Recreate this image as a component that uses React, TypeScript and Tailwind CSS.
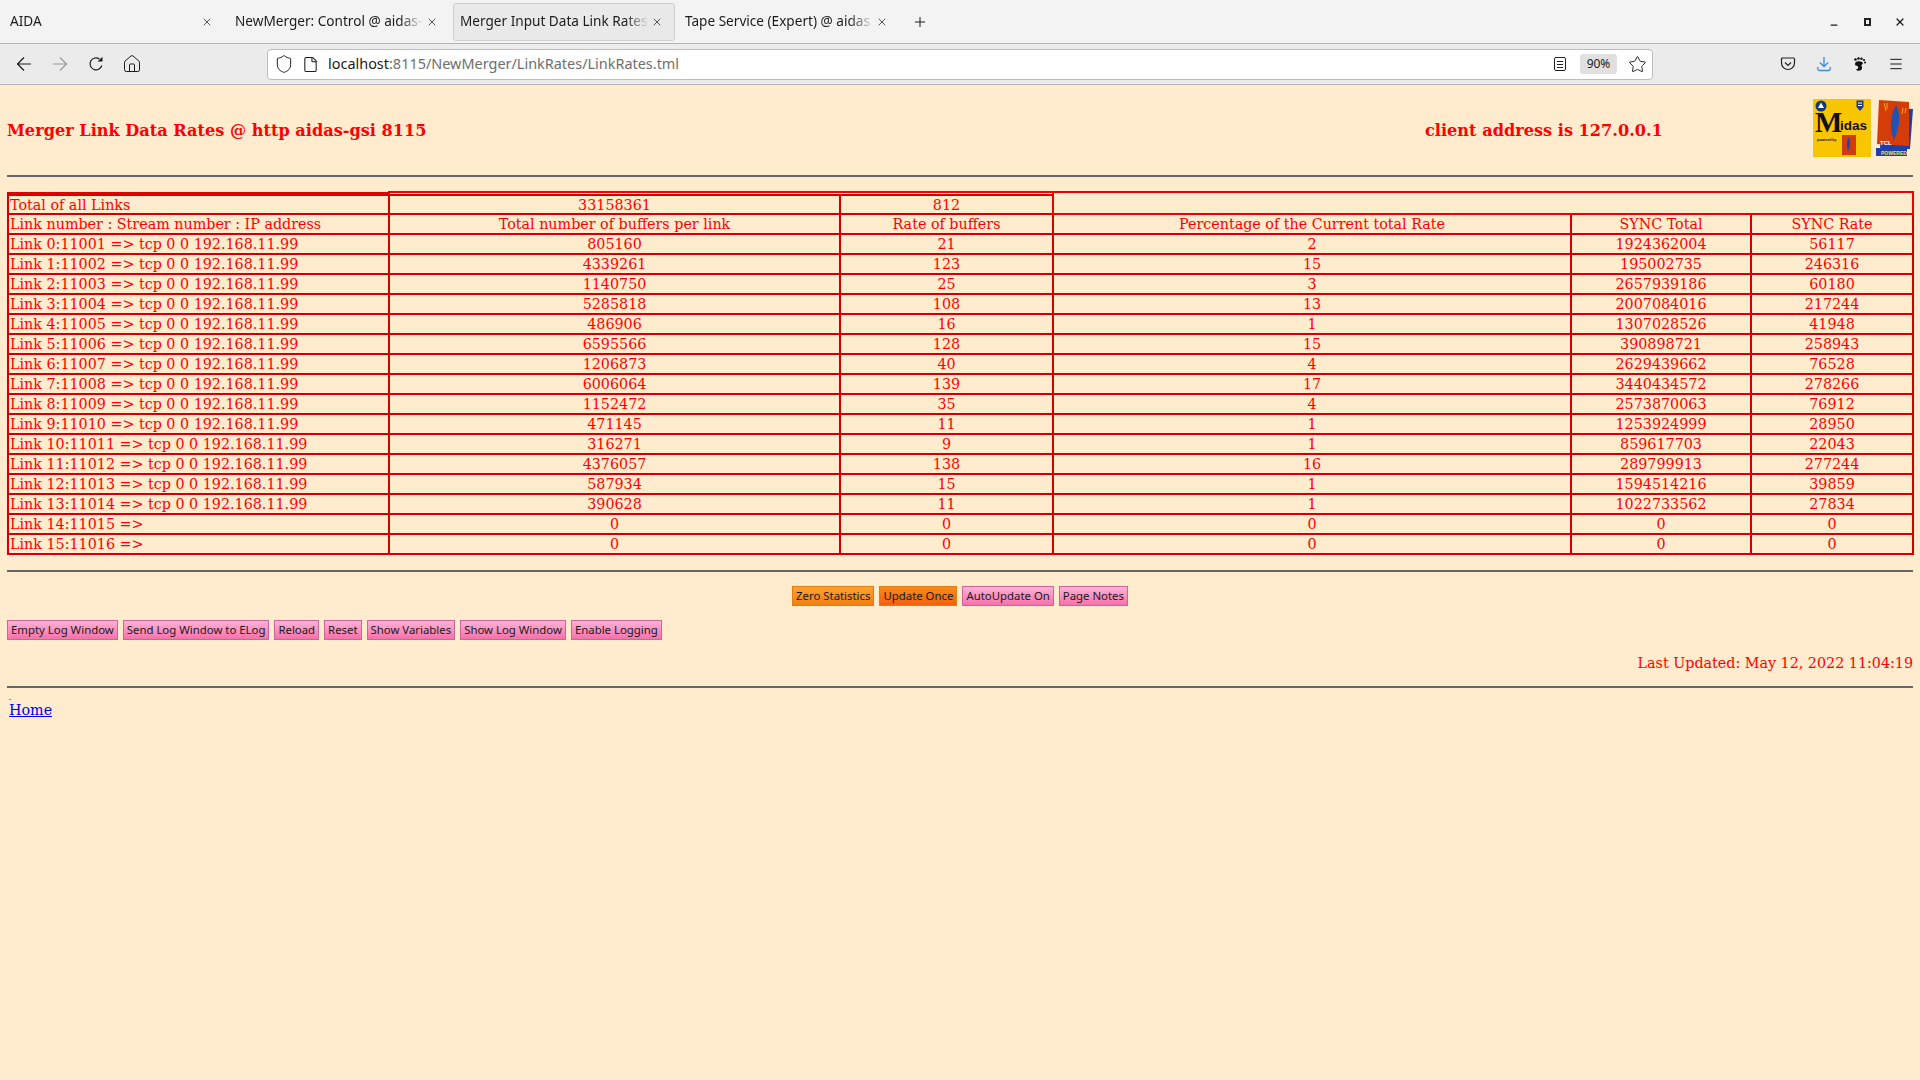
import { Home, Shield, File, Star, Menu, X, Plus, Minus } from "lucide-react";

const serif = "font-['DejaVu_Serif','Liberation_Serif',serif]";

const tabs = [
  { title: "AIDA", active: false },
  { title: "NewMerger: Control @ aidas-", active: false },
  { title: "Merger Input Data Link Rates", active: true },
  { title: "Tape Service (Expert) @ aidas", active: false },
];

// name, buffers, rate, percent, sync total, sync rate
const rows: string[][] = [
  ["Link 0:11001 => tcp 0 0 192.168.11.99", "805160", "21", "2", "1924362004", "56117"],
  ["Link 1:11002 => tcp 0 0 192.168.11.99", "4339261", "123", "15", "195002735", "246316"],
  ["Link 2:11003 => tcp 0 0 192.168.11.99", "1140750", "25", "3", "2657939186", "60180"],
  ["Link 3:11004 => tcp 0 0 192.168.11.99", "5285818", "108", "13", "2007084016", "217244"],
  ["Link 4:11005 => tcp 0 0 192.168.11.99", "486906", "16", "1", "1307028526", "41948"],
  ["Link 5:11006 => tcp 0 0 192.168.11.99", "6595566", "128", "15", "390898721", "258943"],
  ["Link 6:11007 => tcp 0 0 192.168.11.99", "1206873", "40", "4", "2629439662", "76528"],
  ["Link 7:11008 => tcp 0 0 192.168.11.99", "6006064", "139", "17", "3440434572", "278266"],
  ["Link 8:11009 => tcp 0 0 192.168.11.99", "1152472", "35", "4", "2573870063", "76912"],
  ["Link 9:11010 => tcp 0 0 192.168.11.99", "471145", "11", "1", "1253924999", "28950"],
  ["Link 10:11011 => tcp 0 0 192.168.11.99", "316271", "9", "1", "859617703", "22043"],
  ["Link 11:11012 => tcp 0 0 192.168.11.99", "4376057", "138", "16", "289799913", "277244"],
  ["Link 12:11013 => tcp 0 0 192.168.11.99", "587934", "15", "1", "1594514216", "39859"],
  ["Link 13:11014 => tcp 0 0 192.168.11.99", "390628", "11", "1", "1022733562", "27834"],
  ["Link 14:11015 =>", "0", "0", "0", "0", "0"],
  ["Link 15:11016 =>", "0", "0", "0", "0", "0"],
];

const cell = "border-2 border-[#d40000] h-5 p-0 px-[1px] leading-[18px] font-normal";
const firstCell = "border-2 border-[#d40000] h-[19px] p-0 px-[1px] leading-[16px] font-normal";

function PageButton({ label, color }: { label: string; color: "pink" | "orange" | "deep" }) {
  const styles = {
    pink: "border-[#cc6699] bg-gradient-to-b from-[#ffb0d8] to-[#f570aa]",
    orange: "border-[#e08010] bg-gradient-to-b from-[#ffa030] to-[#f08010]",
    deep: "border-[#e08010] bg-gradient-to-b from-[#f98a1c] to-[#f25f0c]",
  };
  return (
    <button className={`h-5 px-[3px] border text-[11.38px] leading-none text-[#1a1a1a] font-['Noto_Sans',sans-serif] whitespace-nowrap ${styles[color]}`}>
      {label}
    </button>
  );
}

function MidasLogo() {
  return (
    <svg width="58" height="58" viewBox="0 0 58 58" className="shrink-0">
      <rect width="58" height="58" fill="#f7c600" />
      <circle cx="8" cy="7" r="5.500" fill="#123a7a" />
      <path d="M8 3.500 L11 9 H5 Z" fill="#ffffff" />
      <path d="M43.500 1.500 H50.500 V8 L47 12 L43.500 8 Z" fill="#1d3c8f" />
      <rect x="45" y="3.500" width="4" height="1" fill="#ffffff" />
      <rect x="45" y="6" width="4" height="1" fill="#ffffff" />
      <text x="2" y="33" fontFamily="'Liberation Serif', serif" fontWeight="700" fontSize="29" fill="#111">M</text>
      <text x="27" y="31" fontFamily="'Liberation Sans', sans-serif" fontWeight="700" fontSize="13.500" fill="#111">idas</text>
      <text x="4" y="41.500" fontFamily="'Liberation Sans', sans-serif" fontWeight="700" fontSize="3.500" fill="#111">powered by</text>
      <rect x="29" y="36" width="14" height="20" fill="#d13c0a" />
      <path d="M36 38 C33 43 34 48 35 52 C37 48 38 43 36 38 Z" fill="#2148a8" />
    </svg>
  );
}

function TclLogo() {
  return (
    <svg width="37" height="58" viewBox="0 0 37 58" className="shrink-0">
      <path d="M6 8 L37 10 L34 50 L4 50 Z" fill="#1d3fa8" />
      <path d="M3 1 L33 3 L33 47 L1 45 Z" fill="#d63c08" />
      <path d="M20 6 C13 18 14 32 18 41 C23 30 26 16 20 6 Z" fill="#2452b0" />
      <path d="M8 4 L10 12 M11 4 L11 10 M27 9 L26 15 M30 9 L29 14" stroke="#f5a623" strokeWidth="1" />
      <text x="4" y="46" fontFamily="'Liberation Sans', sans-serif" fontWeight="700" fontSize="6" fill="#fff">TCL</text>
      <rect x="0" y="49" width="31" height="8" fill="#1d3fa8" />
      <text x="5" y="55.500" fontFamily="'Liberation Sans', sans-serif" fontWeight="700" fontSize="5" fill="#f7e63a">POWERED</text>
    </svg>
  );
}

function NavArrow({ flip, className }: { flip?: boolean; className?: string }) {
  return (
    <svg width="16" height="16" viewBox="0 0 16 16" fill="none" stroke="currentColor" strokeWidth="1.200" className={`${flip ? "rotate-180" : ""} ${className ?? ""}`}>
      <path d="M1.500 8 H15 M8 1.500 L1.500 8 L8 14.500" />
    </svg>
  );
}

function BrowserChrome() {
  return (
    <div className="font-['Noto_Sans',sans-serif] text-[#1c1c1c]">
      <div className="h-[44px] bg-[#f3f3f3] border-b border-[#b4b4b4] flex items-center pl-[3px]">
        {tabs.map((t) => (
          <div
            key={t.title}
            className={`w-[222px] mr-[3px] h-[38px] shrink-0 flex items-center text-[13.6px] rounded-[3px] ${
              t.active ? "pl-[6px] pr-[11px] bg-[#e9e9e9] border border-[#cfcfcf]" : "pl-[7px] pr-[12px]"
            }`}
          >
            <span className="flex-1 overflow-hidden whitespace-nowrap [mask-image:linear-gradient(to_left,transparent,black_24px)]">{t.title}</span>
            <X size={12} strokeWidth={1.5} className="ml-[2px] shrink-0" />
          </div>
        ))}
        <Plus size={16} strokeWidth={1.5} className="ml-[9px]" />
        <div className="ml-auto flex items-center gap-[23px] pr-[14px]">
          <Minus size={10} strokeWidth={3} className="mt-[6px] mr-[2px]" />
          <div className="w-[7px] h-[8px] border-2 border-[#222]" />
          <X size={12} strokeWidth={2.5} />
        </div>
      </div>
      <div className="h-[41px] bg-[#ebebeb] border-b border-[#b8b8b8] flex items-center pl-[16px] pr-[16px]">
        <NavArrow />
        <NavArrow flip className="ml-[20px] text-[#9a9a9a]" />
        <svg width="16" height="16" viewBox="0 0 16 16" fill="none" stroke="currentColor" strokeWidth="1.200" className="ml-[20px]">
          <path d="M13.800 9.500 A6 6 0 1 1 11.500 3" />
          <path d="M9.500 5.500 L14.500 5.500 L14.500 0.800 Z" fill="currentColor" stroke="none" />
        </svg>
        <Home size={20} strokeWidth={1.2} className="ml-[18px]" />
        <div className="ml-[125px] w-[1386px] h-[31px] bg-white border border-[#bdbdbd] rounded-[4px] flex items-center pl-[6px] pr-[5px]">
          <Shield size={20} strokeWidth={1.2} />
          <File size={17} strokeWidth={1.5} className="ml-[8px]" />
          <span className="ml-[9px] text-[14.45px]">
            localhost<span className="text-[#6e6e6e]">:8115/NewMerger/LinkRates/LinkRates.tml</span>
          </span>
          <div className="ml-auto w-[12px] h-[14px] border-[1.5px] border-[#222] rounded-[2px] flex flex-col items-center justify-center gap-[2px]">
            <div className="w-[6px] h-px bg-[#222]" />
            <div className="w-[6px] h-px bg-[#222]" />
            <div className="w-[6px] h-px bg-[#222]" />
          </div>
          <div className="ml-[14px] w-[37px] h-[20px] bg-[#e0e0e0] rounded-[3px] text-[12px] flex items-center justify-center">90%</div>
          <Star size={19} strokeWidth={1.2} className="ml-[11px]" />
        </div>
        <div className="ml-auto flex items-center gap-[20px]">
          <svg width="16" height="16" viewBox="0 0 16 16" fill="none" stroke="#222" strokeWidth="1.200">
            <path d="M2.500 2 H13.500 A1 1 0 0 1 14.500 3 V7 A6.500 6.500 0 0 1 1.500 7 V3 A1 1 0 0 1 2.500 2 Z" />
            <path d="M5 6.500 L8 9.500 L11 6.500" />
          </svg>
          <svg width="16" height="16" viewBox="0 0 16 16" fill="none" stroke="#3b8be0" strokeWidth="1.300">
            <path d="M8 1 V10.500 M3.800 6.500 L8 10.500 L12.200 6.500" />
            <path d="M1.800 11 V13 A1.500 1.500 0 0 0 3.300 14.500 H12.700 A1.500 1.500 0 0 0 14.200 13 V11" />
          </svg>
          <svg width="16" height="16" viewBox="0 0 16 16" fill="#111">
            <path d="M3 8 C3 5.500 6 5 8.500 5.500 C11 6 11.500 7.500 10 8.500 C8.500 9.500 10.500 10.500 10 12.500 C9.500 15 5.500 15.500 4 13.500 C5.500 13 7 12 6 10.500 C5 9.500 3 10 3 8 Z" />
            <circle cx="3.500" cy="3.500" r="1.300" />
            <circle cx="6.500" cy="2.500" r="1.300" />
            <circle cx="9.500" cy="2.800" r="1.200" />
            <circle cx="12" cy="4" r="1.100" />
            <circle cx="13" cy="6.500" r="1" />
          </svg>
          <Menu size={16} strokeWidth={1.5} />
        </div>
      </div>
    </div>
  );
}

function Rule() {
  return <hr className="border-0 h-[2px] bg-[#666666] mx-[7px]" />;
}

export default function App() {
  return (
    <div className={`w-[1920px] h-[1080px] overflow-hidden bg-[#ffebcd] text-[14.3px] text-[#ff0000] ${serif}`}>
      <BrowserChrome />

      {/* header */}
      <div className="h-[90px] flex items-center pl-[7px] pr-[7px] font-bold text-[16.15px]">
        <span className="w-[1418px] mt-[3px]">Merger Link Data Rates @ http aidas-gsi 8115</span>
        <span className="flex-1 mt-[3px]">client address is 127.0.0.1</span>
        <div className="flex items-center gap-[5px] mb-[4px]">
          <MidasLogo />
          <TclLogo />
        </div>
      </div>
      <Rule />

      <div className="mx-[7px] mt-[14px]">
        <table className="w-[1905px] table-fixed border-collapse">
          <colgroup>
            <col className="w-[381px]" />
            <col className="w-[451px]" />
            <col className="w-[213px]" />
            <col className="w-[518px]" />
            <col className="w-[180px]" />
            <col className="w-[162px]" />
          </colgroup>
          <tbody>
            <tr className="h-[3px]">
              <td className="p-0 border-x-2 border-x-[#d40000] bg-[#e00000]" />
              <td colSpan={2} className="p-0 border-t-2 border-t-[#ff0000]" />
              <td colSpan={3} rowSpan={2} className="p-0 border-2 border-[#f00000]" />
            </tr>
            <tr>
              <td className={firstCell}>Total of all Links</td>
              <td className={`${firstCell} text-center`}>33158361</td>
              <td className={`${firstCell} text-center`}>812</td>
            </tr>
            <tr>
              <td className={cell}>Link number : Stream number : IP address</td>
              <td className={`${cell} text-center`}>Total number of buffers per link</td>
              <td className={`${cell} text-center`}>Rate of buffers</td>
              <td className={`${cell} text-center`}>Percentage of the Current total Rate</td>
              <td className={`${cell} text-center`}>SYNC Total</td>
              <td className={`${cell} text-center`}>SYNC Rate</td>
            </tr>
            {rows.map((r) => (
              <tr key={r[0]}>
                {r.map((v, i) => (
                  <td key={i} className={`${cell} ${i > 0 ? "text-center" : ""}`}>
                    {v}
                  </td>
                ))}
              </tr>
            ))}
          </tbody>
        </table>
      </div>

      <div className="mt-[15px]">
        <Rule />
      </div>

      <div className="mt-[14px] flex justify-center gap-[5px]">
        <PageButton label="Zero Statistics" color="orange" />
        <PageButton label="Update Once" color="deep" />
        <PageButton label="AutoUpdate On" color="pink" />
        <PageButton label="Page Notes" color="pink" />
      </div>

      <div className="mt-[14px] ml-[7px] flex gap-[5px]">
        <PageButton label="Empty Log Window" color="pink" />
        <PageButton label="Send Log Window to ELog" color="pink" />
        <PageButton label="Reload" color="pink" />
        <PageButton label="Reset" color="pink" />
        <PageButton label="Show Variables" color="pink" />
        <PageButton label="Show Log Window" color="pink" />
        <PageButton label="Enable Logging" color="pink" />
      </div>

      <div className="mt-[13px] pr-[7px] text-right">Last Updated: May 12, 2022 11:04:19</div>

      <div className="mt-[12px]">
        <Rule />
      </div>

      <div className="mt-[11px] ml-[9px]">
        <div className="w-[2px] h-px bg-[#888888]" />
        <a href="#" className="text-[#0000ee] underline">
          Home
        </a>
      </div>
    </div>
  );
}
